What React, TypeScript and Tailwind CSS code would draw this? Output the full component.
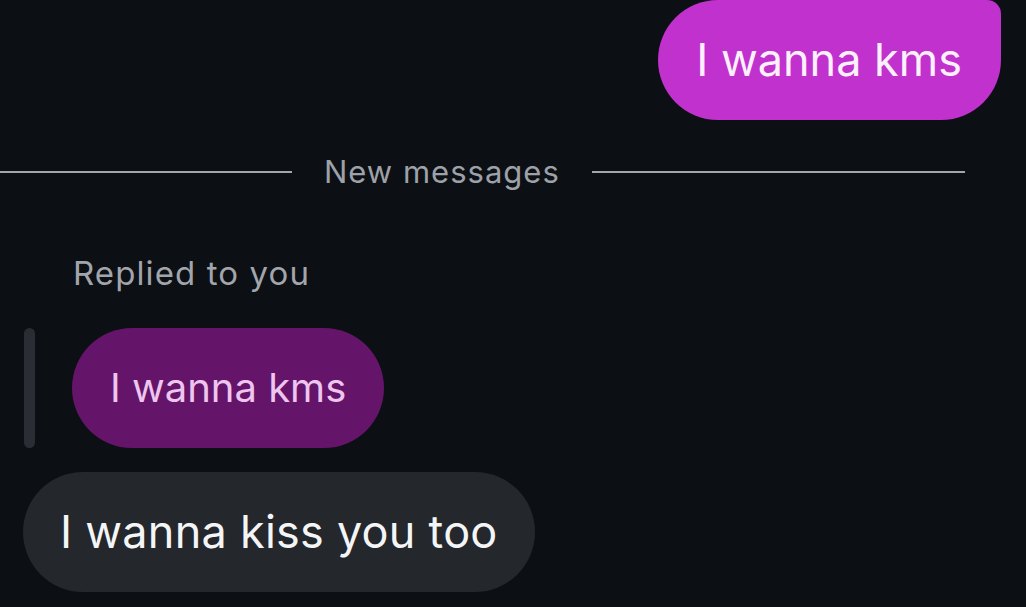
export default function App() {
  return (
    <div className="h-[607px] w-[1026px] overflow-hidden bg-[#0c0f14] font-['Inter',sans-serif]">
      <div className="flex justify-end pr-[25px]">
        <div className="flex h-[120px] items-center rounded-l-[60px] rounded-br-[60px] rounded-tr-[14px] bg-[#c131cd] pl-[38px] pr-[39px] text-[45px] text-[#fdf0fd]">
          I wanna kms
        </div>
      </div>

      <div className="mt-[37px] flex items-center pr-[61px]">
        <div className="h-[2px] w-[292px] bg-[#a3a6ac]" />
        <span className="px-[32px] text-[31px] leading-[30px] tracking-[1px] text-[#9da1a8]">New messages</span>
        <div className="h-[2px] flex-1 bg-[#a3a6ac]" />
      </div>

      <div className="mt-[70px] pl-[73px] text-[33px] leading-[32px] tracking-[1.1px] text-[#a2a5ab]">Replied to you</div>

      <div className="mt-[39px] flex items-stretch gap-[37px] pl-[24px]">
        <div className="w-[11px] rounded-full bg-[#2a2d33]" />
        <div className="flex h-[120px] items-center rounded-full bg-[#641569] px-[38px] text-[40px] text-[#eec5ee]">
          I wanna kms
        </div>
      </div>

      <div className="mt-[24px] flex pl-[23px]">
        <div className="flex h-[120px] items-center rounded-full bg-[#24272c] px-[37px] text-[45px] tracking-[0.25px] text-[#f4f5f6]">
          I wanna kiss you too
        </div>
      </div>
    </div>
  );
}
